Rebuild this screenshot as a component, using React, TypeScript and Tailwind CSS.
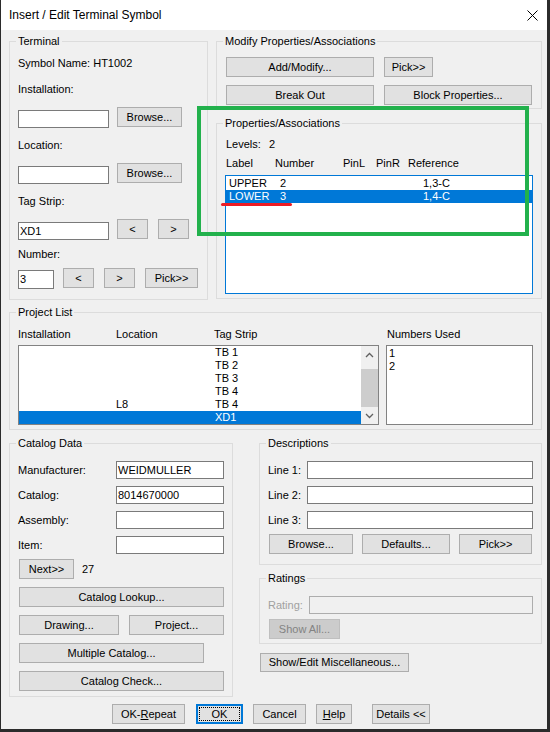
import type { ReactNode } from 'react';

function Group({ title, className, children }: { title: string; className: string; children?: ReactNode }) {
  return (
    <fieldset className={`border border-[#dcdcdc] ${className}`}>
      <legend className="ml-[6px] px-[2px] leading-[12px]">{title}</legend>
      {children}
    </fieldset>
  );
}

function Btn({ className, children }: { className: string; children?: ReactNode }) {
  return (
    <div className={`flex shrink-0 items-center justify-center border border-[#adadad] bg-[#e1e1e1] leading-[13px] ${className}`}>
      {children}
    </div>
  );
}

function Field({ className, children }: { className: string; children?: ReactNode }) {
  return (
    <div className={`flex shrink-0 items-center border border-[#7a7a7a] bg-white pl-[1px] leading-[13px] ${className}`}>
      {children}
    </div>
  );
}

function Chevron({ up }: { up?: boolean }) {
  return (
    <svg width="9" height="6" viewBox="0 0 9 6">
      <path d={up ? 'M1 5 L4.5 1.5 L8 5' : 'M1 1 L4.5 4.5 L8 1'} fill="none" stroke="#606060" strokeWidth="1.3" />
    </svg>
  );
}

const tagRows = [
  { loc: '', tag: 'TB 1' },
  { loc: '', tag: 'TB 2' },
  { loc: '', tag: 'TB 3' },
  { loc: '', tag: 'TB 4' },
  { loc: 'L8', tag: 'TB 4' },
  { loc: '', tag: 'XD1', selected: true },
];

export default function App() {
  return (
    <div className="relative flex h-[732px] w-[550px] flex-col border-b-[3px] border-l border-r-[3px] border-[#2b2b2b] bg-[#f0f0f0] font-['Liberation_Sans',Arial,sans-serif] text-[11px] text-black">
      {/* Title bar */}
      <div className="flex h-[30px] shrink-0 items-center justify-between bg-white pl-[8px] pr-[9px]">
        <span className="text-[12px]">Insert / Edit Terminal Symbol</span>
        <svg width="11" height="11" viewBox="0 0 11 11">
          <path d="M0.5 0.5 L10.5 10.5 M10.5 0.5 L0.5 10.5" stroke="#000" strokeWidth="1" />
        </svg>
      </div>

      <div className="flex flex-col pl-[8px]">
        {/* Top row */}
        <div className="mt-[5px] flex">
          <Group title="Terminal" className="h-[265px] w-[199px] shrink-0">
            <div className="flex flex-col px-[8px]">
              <div className="mt-[10px] h-[13px] leading-[13px]">Symbol Name: HT1002</div>
              <div className="mt-[13px] h-[13px] leading-[13px]">Installation:</div>
              <div className="mt-[11px] flex h-[21px] items-start">
                <Field className="mt-[3px] h-[18px] w-[91px]" />
                <Btn className="ml-[8px] h-[20px] w-[65px]">Browse...</Btn>
              </div>
              <div className="mt-[11px] h-[13px] leading-[13px]">Location:</div>
              <div className="mt-[11px] flex h-[21px] items-start">
                <Field className="mt-[3px] h-[18px] w-[91px]" />
                <Btn className="ml-[8px] h-[20px] w-[65px]">Browse...</Btn>
              </div>
              <div className="mt-[11px] h-[13px] leading-[13px]">Tag Strip:</div>
              <div className="mt-[11px] flex h-[21px] items-start">
                <Field className="mt-[3px] h-[18px] w-[91px]">XD1</Field>
                <Btn className="ml-[8px] h-[20px] w-[31px]">&lt;</Btn>
                <Btn className="ml-[10px] h-[20px] w-[31px]">&gt;</Btn>
              </div>
              <div className="mt-[8px] h-[13px] leading-[13px]">Number:</div>
              <div className="mt-[7px] flex h-[21px] items-start">
                <Field className="mt-[2px] h-[19px] w-[36px]">3</Field>
                <Btn className="ml-[9px] h-[20px] w-[31px]">&lt;</Btn>
                <Btn className="ml-[10px] h-[20px] w-[31px]">&gt;</Btn>
                <Btn className="ml-[10px] h-[20px] w-[53px]">Pick&gt;&gt;</Btn>
              </div>
            </div>
          </Group>

          <div className="ml-[8px] flex w-[326px] flex-col">
            <Group title="Modify Properties/Associations" className="h-[74px] w-[326px]">
              <div className="flex flex-col pl-[9px]">
                <div className="mt-[10px] flex">
                  <Btn className="h-[20px] w-[148px]">Add/Modify...</Btn>
                  <Btn className="ml-[10px] h-[20px] w-[49px]">Pick&gt;&gt;</Btn>
                </div>
                <div className="mt-[8px] flex">
                  <Btn className="h-[20px] w-[148px]">Break Out</Btn>
                  <Btn className="ml-[10px] h-[20px] w-[148px]">Block Properties...</Btn>
                </div>
              </div>
            </Group>

            <Group title="Properties/Associations" className="mt-[8px] h-[182px] w-[326px]">
              <div className="flex flex-col pl-[8px]">
                <div className="ml-[1px] mt-[9px] flex h-[13px] leading-[13px]">
                  <span className="w-[43px]">Levels:</span>
                  <span>2</span>
                </div>
                <div className="ml-[1px] mt-[6px] flex h-[13px] leading-[13px]">
                  <span className="w-[49px]">Label</span>
                  <span className="w-[68px]">Number</span>
                  <span className="w-[33px]">PinL</span>
                  <span className="w-[32px]">PinR</span>
                  <span>Reference</span>
                </div>
                <div className="mt-[5px] h-[119px] w-[308px] border border-[#0078d7] bg-white pt-[1px]">
                  <div className="flex h-[13px] pl-[3px] leading-[13px]">
                    <span className="w-[51px]">UPPER</span>
                    <span className="w-[143px]">2</span>
                    <span>1,3-C</span>
                  </div>
                  <div className="flex h-[13px] bg-[#0078d7] pl-[3px] leading-[13px] text-white">
                    <span className="w-[51px]">LOWER</span>
                    <span className="w-[143px]">3</span>
                    <span>1,4-C</span>
                  </div>
                </div>
              </div>
            </Group>
          </div>
        </div>

        {/* Project list */}
        <Group title="Project List" className="mt-[6px] h-[124px] w-[533px]">
          <div className="flex flex-col pl-[8px]">
            <div className="mt-[10px] flex h-[13px] leading-[13px]">
              <span className="w-[98px]">Installation</span>
              <span className="w-[98px]">Location</span>
              <span className="w-[173px]">Tag Strip</span>
              <span>Numbers Used</span>
            </div>
            <div className="mt-[4px] flex">
              <div className="flex h-[80px] w-[361px] border border-[#828282] bg-white">
                <div className="flex flex-1 flex-col">
                  {tagRows.map((r, i) => (
                    <div
                      key={i}
                      className={`flex h-[13px] leading-[13px] ${r.selected ? 'bg-[#0078d7] text-white' : ''}`}
                    >
                      <span className="w-[97px]" />
                      <span className="w-[99px]">{r.loc}</span>
                      <span>{r.tag}</span>
                    </div>
                  ))}
                </div>
                <div className="flex w-[17px] flex-col bg-[#f0f0f0]">
                  <div className="flex h-[17px] items-center justify-center">
                    <Chevron up />
                  </div>
                  <div className="mt-[6px] h-[38px] bg-[#cdcdcd]" />
                  <div className="flex h-[17px] items-center justify-center">
                    <Chevron />
                  </div>
                </div>
              </div>
              <div className="ml-[7px] h-[80px] w-[147px] border border-[#828282] bg-white pl-[2px] pt-[1px]">
                <div className="h-[13px] leading-[13px]">1</div>
                <div className="h-[13px] leading-[13px]">2</div>
              </div>
            </div>
          </div>
        </Group>

        {/* Bottom groups */}
        <div className="mt-[7px] flex">
          <Group title="Catalog Data" className="h-[260px] w-[224px] shrink-0">
            <div className="flex flex-col pl-[8px]">
              <div className="mt-[12px] flex items-center">
                <span className="w-[98px]">Manufacturer:</span>
                <Field className="h-[18px] w-[108px]">WEIDMULLER</Field>
              </div>
              <div className="mt-[7px] flex items-center">
                <span className="w-[98px]">Catalog:</span>
                <Field className="h-[18px] w-[108px]">8014670000</Field>
              </div>
              <div className="mt-[7px] flex items-center">
                <span className="w-[98px]">Assembly:</span>
                <Field className="h-[18px] w-[108px]" />
              </div>
              <div className="mt-[7px] flex items-center">
                <span className="w-[98px]">Item:</span>
                <Field className="h-[18px] w-[108px]" />
              </div>
              <div className="ml-[1px] mt-[5px] flex items-center">
                <Btn className="h-[20px] w-[55px]">Next&gt;&gt;</Btn>
                <span className="ml-[8px]">27</span>
              </div>
              <Btn className="ml-[1px] mt-[8px] h-[20px] w-[205px]">Catalog Lookup...</Btn>
              <div className="ml-[1px] mt-[8px] flex">
                <Btn className="h-[20px] w-[100px]">Drawing...</Btn>
                <Btn className="ml-[10px] h-[20px] w-[95px]">Project...</Btn>
              </div>
              <Btn className="ml-[1px] mt-[8px] h-[20px] w-[185px]">Multiple Catalog...</Btn>
              <Btn className="ml-[1px] mt-[8px] h-[20px] w-[205px]">Catalog Check...</Btn>
            </div>
          </Group>

          <div className="ml-[26px] flex w-[283px] flex-col">
            <Group title="Descriptions" className="h-[128px] w-[283px]">
              <div className="flex flex-col pl-[8px]">
                <div className="mt-[12px] flex items-center">
                  <span className="w-[39px]">Line 1:</span>
                  <Field className="h-[18px] w-[226px]" />
                </div>
                <div className="mt-[7px] flex items-center">
                  <span className="w-[39px]">Line 2:</span>
                  <Field className="h-[18px] w-[226px]" />
                </div>
                <div className="mt-[7px] flex items-center">
                  <span className="w-[39px]">Line 3:</span>
                  <Field className="h-[18px] w-[226px]" />
                </div>
                <div className="ml-[1px] mt-[5px] flex">
                  <Btn className="h-[20px] w-[84px]">Browse...</Btn>
                  <Btn className="ml-[9px] h-[20px] w-[88px]">Defaults...</Btn>
                  <Btn className="ml-[9px] h-[20px] w-[73px]">Pick&gt;&gt;</Btn>
                </div>
              </div>
            </Group>

            <Group title="Ratings" className="mt-[7px] h-[72px] w-[283px]">
              <div className="flex flex-col pl-[8px]">
                <div className="mt-[12px] flex items-center">
                  <span className="w-[41px] text-[#a0a0a0]">Rating:</span>
                  <div className="h-[18px] w-[224px] border border-[#adadad] bg-[#f0f0f0]" />
                </div>
                <div className="ml-[1px] mt-[5px] flex h-[20px] w-[71px] items-center justify-center border border-[#bfbfbf] bg-[#cccccc] text-[#838383]">
                  Show All...
                </div>
              </div>
            </Group>

            <Btn className="ml-[1px] mt-[9px] h-[19px] w-[149px]">Show/Edit Miscellaneous...</Btn>
          </div>
        </div>

        {/* Dialog buttons */}
        <div className="mt-[7px] flex">
          <Btn className="ml-[103px] h-[20px] w-[73px]">
            OK-<span className="underline">R</span>epeat
          </Btn>
          <div className="ml-[11px] flex h-[20px] w-[47px] items-center justify-center border border-[#0078d7] bg-[#e1e1e1] p-[2px] shadow-[inset_0_0_0_1px_#0078d7]">
            <div className="flex h-full w-full items-center justify-center border border-dotted border-black">OK</div>
          </div>
          <Btn className="ml-[10px] h-[20px] w-[53px]">Cancel</Btn>
          <Btn className="ml-[10px] h-[20px] w-[36px]">
            <span className="underline">H</span>elp
          </Btn>
          <Btn className="ml-[20px] h-[20px] w-[58px]">Details &lt;&lt;</Btn>
        </div>
      </div>

      {/* Annotation overlays */}
      <div className="pointer-events-none absolute left-[196px] top-[106px] h-[130px] w-[332px] border-[4px] border-[#22b14c]" />
      <div className="pointer-events-none absolute left-[220px] top-[203px] h-[3px] w-[71px] rounded-full bg-[#ed1c24]" />
    </div>
  );
}
